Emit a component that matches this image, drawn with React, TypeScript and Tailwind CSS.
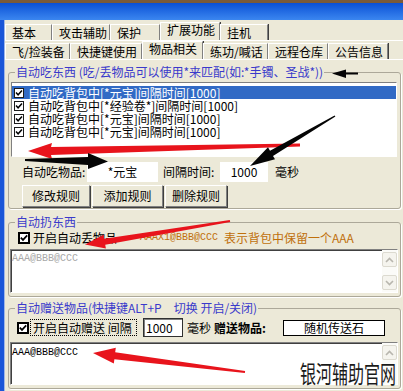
import React from 'react'

const CJK = "font-['Noto_Sans_CJK_SC',sans-serif]"
const MONO = "font-['Liberation_Mono','Noto_Sans_CJK_SC',monospace]"

const outerTabs = [
  { label: '基本', w: 47 },
  { label: '攻击辅助', w: 58 },
  { label: '保护', w: 50 },
  { label: '扩展功能', w: 60, active: true },
  { label: '挂机', w: 48 },
]

const innerTabs = [
  { label: '飞/捡装备', w: 65 },
  { label: '快捷键使用', w: 72 },
  { label: '物品相关', w: 61, active: true },
  { label: '练功/喊话', w: 65 },
  { label: '远程仓库', w: 60 },
  { label: '公告信息', w: 60 },
]

const rules = [
  '自动吃背包中[*元宝]间隔时间[1000]',
  '自动吃背包中[*经验卷*]间隔时间[1000]',
  '自动吃背包中[*元宝]间隔时间[1000]',
  '自动吃背包中[*元宝]间隔时间[1000]',
]

function Tab({ label, w, active }: { label: string; w: number; active?: boolean }) {
  return (
    <div
      style={{ width: w }}
      className={`flex items-center pl-[6px] border-t border-l border-t-white border-l-white border-r border-r-[#808080] shadow-[1px_0_0_#404040] text-[12px] leading-[14px] text-black ${
        active ? 'h-[18px] pb-[3px]' : 'h-[16px]'
      }`}
    >
      {label}
    </div>
  )
}

function SmallCheck() {
  return (
    <span className="w-[10px] h-[10px] shrink-0 border border-[#1c1c1c] bg-white flex items-center justify-center">
      <svg width="8" height="8" viewBox="0 0 8 8">
        <path d="M1 3.6 L3.1 5.8 L7 1.6" stroke="#000" strokeWidth="1.5" fill="none" />
      </svg>
    </span>
  )
}

function BigCheck() {
  return (
    <span className="w-[12px] h-[12px] shrink-0 border-2 border-black bg-white flex items-center justify-center">
      <svg width="8" height="8" viewBox="0 0 8 8">
        <path d="M0.8 3.6 L3 5.9 L7.2 1.4" stroke="#000" strokeWidth="1.7" fill="none" />
      </svg>
    </span>
  )
}

function Button({ label, w }: { label: string; w: number }) {
  return (
    <div
      style={{ width: w }}
      className="h-[22px] flex items-center justify-center bg-[#ECE9D8] border border-t-white border-l-white border-r-[#808080] border-b-[#808080] shadow-[1px_1px_0_#404040] text-[12px] leading-[14px] text-black"
    >
      {label}
    </div>
  )
}

function ScrollArrow({ up }: { up?: boolean }) {
  return (
    <div className="h-[15px] w-[15px] rounded-[2px] border border-[#dcdad0] bg-[#f5f4ee] flex items-center justify-center">
      <svg width="9" height="6" viewBox="0 0 9 6">
        <path d={up ? 'M1 5 L4.5 1.5 L8 5' : 'M1 1 L4.5 4.5 L8 1'} stroke="#b8b6ae" strokeWidth="1.6" fill="none" />
      </svg>
    </div>
  )
}

function Legend({ children }: { children: React.ReactNode }) {
  return (
    <legend className="ml-[6px] px-[1px] text-[12px] leading-[14px] text-[#3a3acb]">{children}</legend>
  )
}

export default function App() {
  return (
    <div className={`relative w-[403px] h-[391px] overflow-hidden bg-[#ECE9D8] ${CJK}`}>
      {/* desktop strip + caption */}
      <div className="h-[3px] bg-[#7a5a3a]" />
      <div className="h-[17px] bg-gradient-to-b from-[#0a4fd6] to-[#3b86f0]" />

      <div className="flex h-[371px]">
        <div className="w-[5px] bg-[#1a56d8] border-r border-r-[#9fb6e6]" />
        <div className="flex-1 flex flex-col">
          <div className="h-[2px]" />
          <div className="h-[18px] flex items-end">
            {outerTabs.map((t) => (
              <Tab key={t.label} {...t} />
            ))}
          </div>
          <div className="h-[1px] bg-white" />
          <div className="h-[18px] flex items-end">
            {innerTabs.map((t) => (
              <Tab key={t.label} {...t} />
            ))}
          </div>
          <div className="h-[1px] bg-white" />

          {/* 自动吃东西 */}
          <fieldset className="ml-[3px] mt-[5px] w-[393px] border border-[#aca899] rounded-[3px] shadow-[1px_1px_0_#fff] pb-[1px]">
            <Legend>自动吃东西 (吃/丢物品可以使用*来匹配(如:*手镯、圣战*))</Legend>
            <div className="ml-[2px] mt-[3px] w-[386px] h-[75px] bg-white border border-t-[#808080] border-l-[#808080] border-b-white border-r-white pt-[3px]">
              {rules.map((r, i) => (
                <div
                  key={i}
                  className={`h-[13px] flex items-center gap-[4px] pl-[2px] text-[12px] leading-[13px] ${
                    i === 0 ? 'bg-[#316AC5] text-white' : 'text-black'
                  }`}
                >
                  <SmallCheck />
                  <span>{r}</span>
                </div>
              ))}
            </div>
            <div className="mt-[5px] h-[20px] flex items-center text-[12px] leading-[14px] text-black">
              <span className="ml-[13px] w-[65px]">自动吃物品:</span>
              <div className="w-[71px] h-[20px] bg-white flex items-center justify-center">*元宝</div>
              <span className="ml-[5px] w-[57px]">间隔时间:</span>
              <div className="w-[48px] h-[20px] bg-white flex items-center justify-center">1000</div>
              <span className="ml-[7px]">毫秒</span>
            </div>
            <div className="mt-[3px] ml-[13px] flex gap-[2px]">
              <Button label="修改规则" w={68} />
              <Button label="添加规则" w={71} />
              <Button label="删除规则" w={62} />
            </div>
          </fieldset>

          {/* 自动扔东西 */}
          <fieldset className="ml-[3px] mt-[6px] w-[393px] border border-[#aca899] rounded-[3px] shadow-[1px_1px_0_#fff] pb-[3px]">
            <Legend>自动扔东西</Legend>
            <div className="mt-[2px] h-[14px] flex items-center text-[12px] leading-[14px]">
              <span className="ml-[9px]">
                <BigCheck />
              </span>
              <span className="ml-[3px] text-black">开启自动丢物品</span>
              <span className={`ml-[23px] text-[10px] text-[#c0700c] ${MONO}`}>AAAX1@BBB@CCC</span>
              <span className="ml-[6px] text-[#c0700c]">表示背包中保留一个AAA</span>
            </div>
            <div className="ml-[1px] mt-[4px] w-[388px] h-[44px] flex bg-white border border-t-[#808080] border-l-[#808080] border-b-white border-r-white shadow-[inset_1px_1px_0_#404040]">
              <div className={`flex-1 pl-[1px] pt-[3px] text-[10px] leading-[12px] text-[#a8a8a8] ${MONO}`}>
                AAA@BBB@CCC
              </div>
              <div className="w-[15px] flex flex-col justify-between py-[2px] bg-[#fbfbf8]">
                <ScrollArrow up />
                <ScrollArrow />
              </div>
            </div>
          </fieldset>

          {/* 自动赠送物品 */}
          <fieldset className="ml-[3px] mt-[4px] w-[393px] border border-[#aca899] rounded-[3px] shadow-[1px_1px_0_#fff] pb-[3px]">
            <Legend>自动赠送物品(快捷键ALT+P　切换 开启/关闭)</Legend>
            <div className="mt-[3px] h-[19px] flex items-center text-[12px] leading-[14px] text-black">
              <span className="ml-[8px]">
                <BigCheck />
              </span>
              <span className="ml-[1px] w-[107px] h-[17px] flex items-center px-[2px] border border-dotted border-black">
                开启自动赠送 间隔
              </span>
              <div className="ml-[6px] w-[40px] h-[19px] flex items-center pl-[2px] bg-white border border-[#303030] shadow-[inset_1px_1px_0_#808080]">
                1000
              </div>
              <span className="ml-[4px]">毫秒</span>
              <span className="ml-[3px] w-[69px] font-bold">赠送物品:</span>
              <div className="w-[102px] h-[16px] flex items-center justify-center bg-white border border-black">
                随机传送石
              </div>
            </div>
            <div className="ml-[1px] mt-[5px] w-[388px] h-[43px] flex bg-white border border-t-[#808080] border-l-[#808080] border-b-white border-r-white shadow-[inset_1px_1px_0_#404040]">
              <div className={`flex-1 pl-[1px] pt-[4px] text-[10px] leading-[12px] text-black ${MONO}`}>
                AAA@BBB@CCC
              </div>
              <div className="w-[15px] flex flex-col py-[2px] bg-[#fbfbf8]">
                <ScrollArrow up />
              </div>
            </div>
          </fieldset>
        </div>
      </div>

      {/* watermark */}
      <div className="absolute left-[300px] top-[364px] text-[16px] leading-[16px] text-[#1a1a1a] scale-y-150">
        银河辅助官网
      </div>

      {/* annotation arrows */}
      <svg className="absolute inset-0 pointer-events-none" width="403" height="391" viewBox="0 0 403 391">
        <polygon points="28,151 52,143 51,147 300,143.5 300,146.5 51,155 52,159" fill="#e8141c" />
        <polygon points="25,159 88,157 88,153 108,161.5 88,169 88,165 25,161" fill="#050505" />
        <polygon points="250,166 268,147.3 270,150.7 334.6,115.4 335.4,116.6 273,155.9 275,159.3" fill="#050505" />
        <polygon points="332,73.5 346,69.5 346,72.5 358,72.5 358,74.5 346,74.5 346,78" fill="#050505" />
        <polygon points="85,244.5 103.6,234.8 104.2,238.7 229.8,220 230.2,222 105.2,244.7 105.9,248.6" fill="#e8141c" />
        <polygon points="93,353 115.8,347.8 115.2,352.2 245.1,371 244.9,373 114.4,359.2 113.8,363.6" fill="#e8141c" />
      </svg>
    </div>
  )
}
